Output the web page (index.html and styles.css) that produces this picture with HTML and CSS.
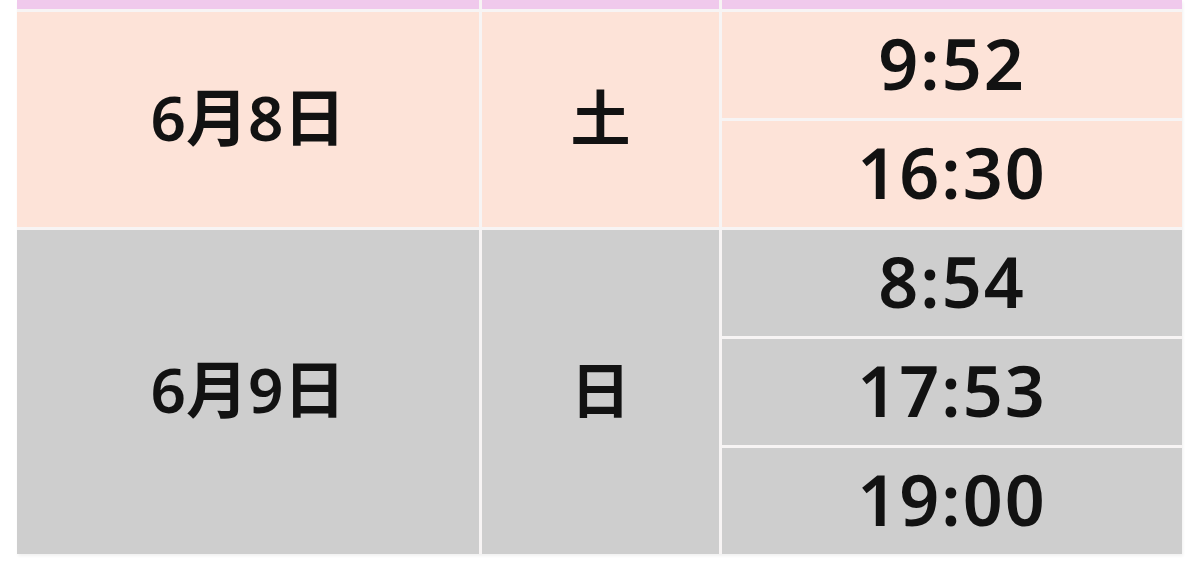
FILE: index.html
```html
<!DOCTYPE html>
<html lang="ja">
<head>
<meta charset="utf-8">
<link rel="stylesheet" href="styles.css">
</head>
<body>
<div class="page">
  <div class="schedule">
    <div class="cell head"></div>
    <div class="cell head"></div>
    <div class="cell head"></div>

    <div class="cell peach date span2">6月8日</div>
    <div class="cell peach day span2">土</div>
    <div class="cell peach time">9:52</div>
    <div class="cell peach time">16:30</div>

    <div class="cell grey date span3">6月9日</div>
    <div class="cell grey day span3">日</div>
    <div class="cell grey time">8:54</div>
    <div class="cell grey time">17:53</div>
    <div class="cell grey time">19:00</div>
  </div>
</div>
</body>
</html>
```

FILE: styles.css
```css
html, body {
  margin: 0;
  padding: 0;
  background: #ffffff;
}

.page {
  width: 1200px;
  height: 581px;
  overflow: hidden;
  padding-left: 17px;
  box-sizing: border-box;
}

.schedule {
  display: grid;
  width: 1165px;
  grid-template-columns: 462px 237px 460px;
  grid-template-rows: 9px repeat(5, 106px);
  gap: 3px;
  background: #f7f4f4;
  box-shadow: 1px 2px 3px rgba(0, 0, 0, 0.06);
  font-family: "Noto Sans", "Noto Sans CJK JP", sans-serif;
  font-weight: 600;
  color: #121212;
}

.cell {
  display: flex;
  align-items: center;
  justify-content: center;
  line-height: 1;
}

.head {
  background: #f0c9ec;
}

.peach {
  background: #fde3d8;
}

.grey {
  background: #cecece;
}

.span2 {
  grid-row: span 2;
}

.span3 {
  grid-row: span 3;
}

.time {
  font-size: 70px;
  letter-spacing: 2px;
  padding-bottom: 4px;
}

.date {
  font-size: 62px;
  padding-bottom: 6px;
}

.day {
  font-size: 60px;
  padding-bottom: 4px;
}
```
